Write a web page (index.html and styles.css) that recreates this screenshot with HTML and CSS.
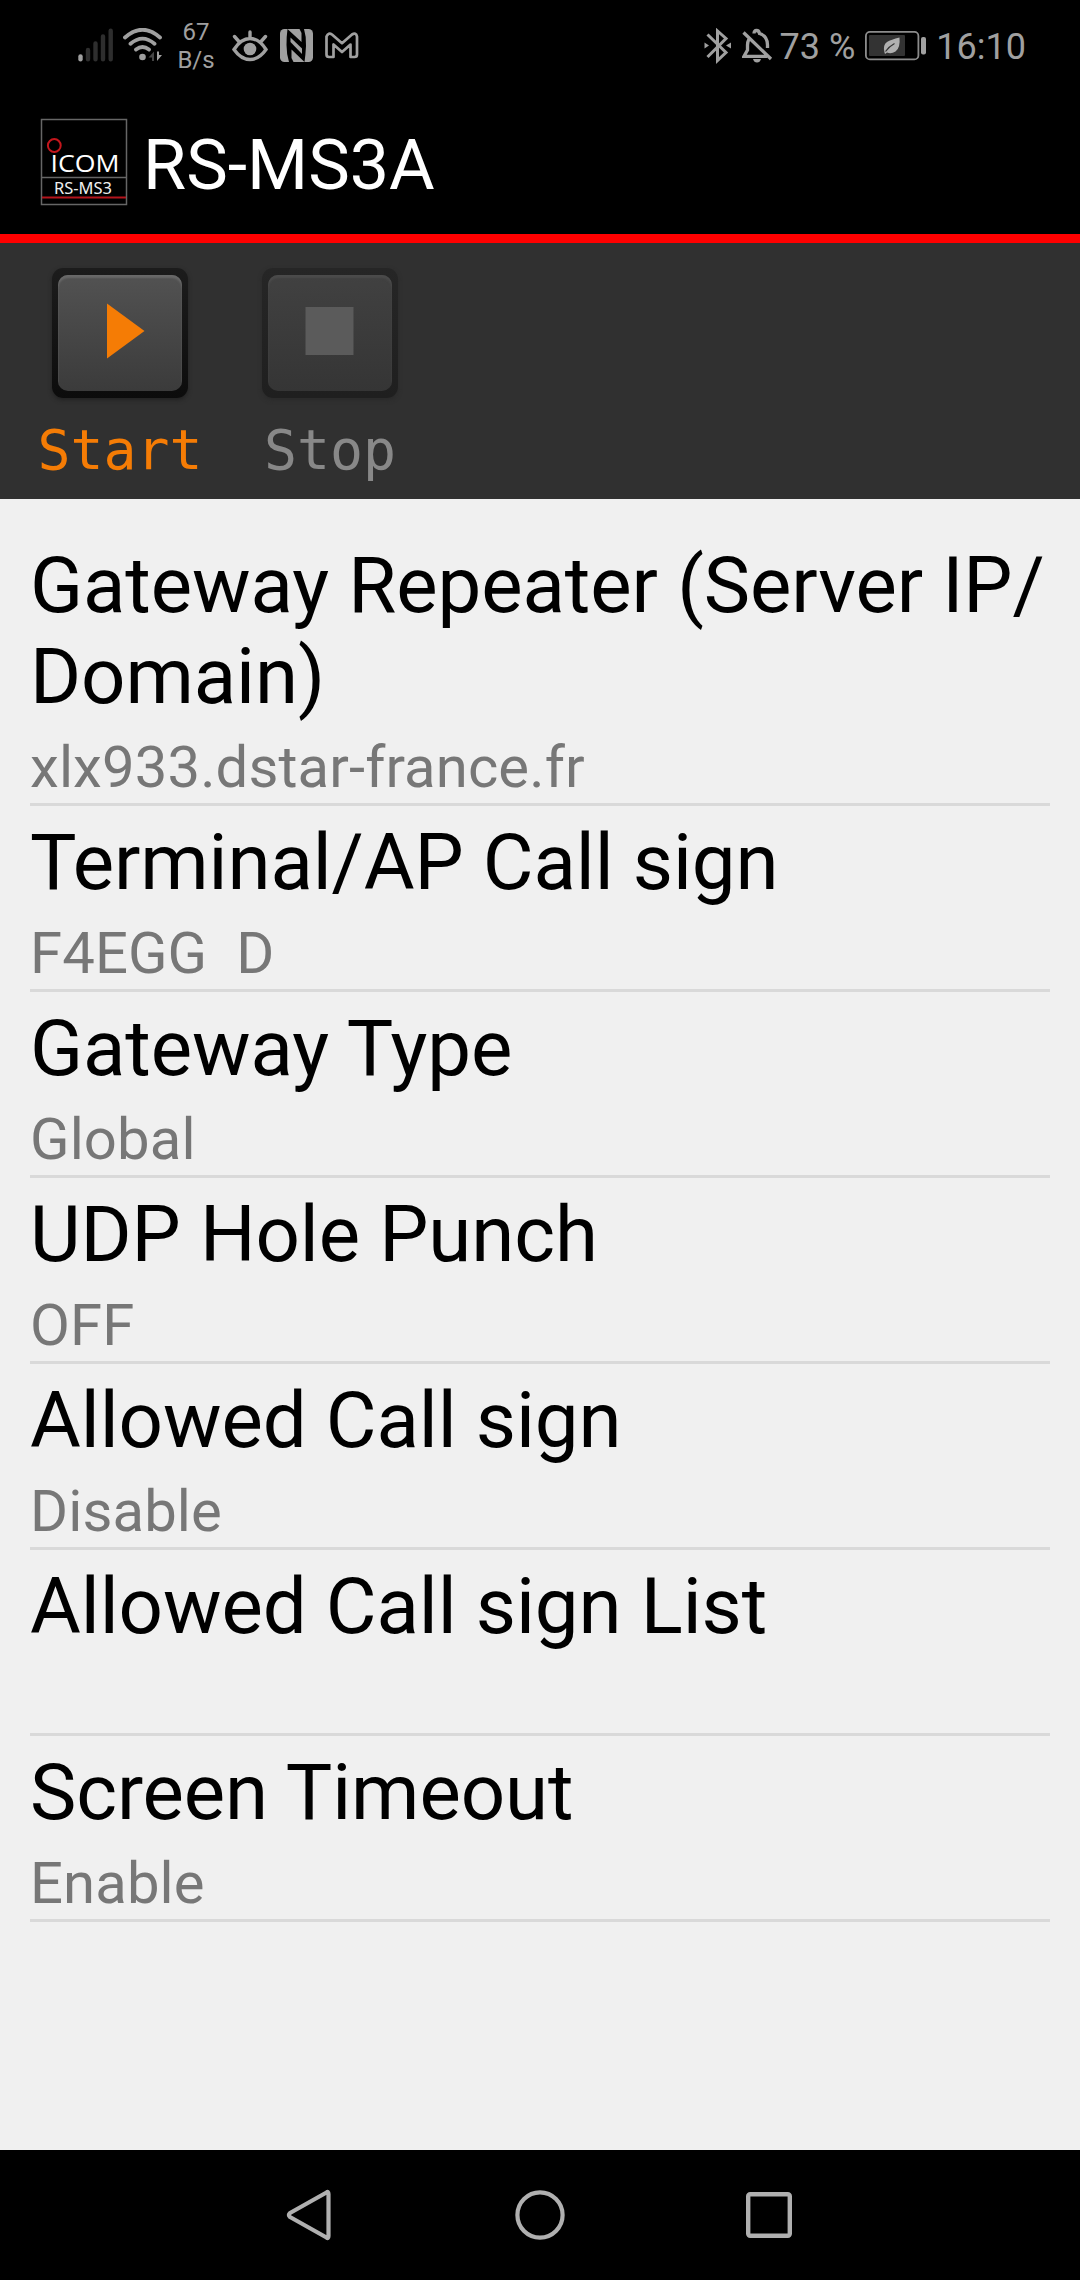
FILE: index.html
```html
<!DOCTYPE html>
<html lang="en">
<head>
<meta charset="utf-8">
<title>RS-MS3A</title>
<link rel="stylesheet" href="styles.css">
</head>
<body>
<div class="screen">
  <div class="status">
    <div class="status-left">
      <svg class="signal" width="36" height="34" viewBox="0 0 36 34" stroke-width="4.4" stroke-linecap="round" stroke="#2e2e2e"><path d="M2.500 28.500v2.700" stroke="#a0a0a0"/><path d="M10 22v9.200M17.500 15.500v15.700M25 8.500v22.700M32.700 2.700v28.500"/></svg>
      <svg class="wifi" width="40" height="34" viewBox="0 0 40 34" fill="none" stroke="#a0a0a0" stroke-width="3.800" stroke-linecap="round"><path d="M2 9.500Q19.500-6 37 9.500M7.500 15.700Q19.500 5.500 31.500 15.700M13 21.500Q19.500 16.500 26 21.500"/><circle cx="19.500" cy="29" r="3.300" fill="#a0a0a0" stroke="none"/><path d="M25.500 29.500l5.500-6v9.500h-2v-3.500z" fill="#444" stroke="none"/><path d="M34 23.500v9.500l5-6h-3v-3.500z" fill="#a0a0a0" stroke="none"/></svg>
      <div class="rate">67<br>B/s</div>
      <svg class="eye" width="36" height="32" viewBox="0 0 36 32" fill="none" stroke="#a0a0a0" stroke-width="3.400" stroke-linecap="round"><path d="M2 19.500Q9 8.500 18 8.500T34 19.500Q27 29.500 18 29.500T2 19.500zM18 8V2M6.500 11L2.500 6.500M29.500 11L33.500 6.500"/><circle cx="18" cy="19" r="6.300" fill="#a0a0a0" stroke="none"/></svg>
      <svg class="nfc" width="34" height="34" viewBox="0 0 34 34"><rect width="33" height="33" rx="4.500" fill="#a0a0a0"/><path d="M7.500 0L21.500 13V4L19.500 0H24Q26.500 8 26 17T24.500 33L11.500 20.500V29L13.500 33H9Q6.500 25 6.500 16T7.500 0z" fill="#000"/><path d="M10.500 8.500L22 19.500V25L10.500 13z" fill="#a0a0a0"/></svg>
      <svg class="mail" width="34" height="28" viewBox="0 0 34 28" fill="none" stroke="#a0a0a0" stroke-width="2.700" stroke-linejoin="round"><path d="M1.500 4.500Q3.500 0 7 2.500L17 11.200 27 2.500Q31 0 32 4.500V22.500Q32 25 29.500 25H25.500V12.500L17 20 8.500 12.500V25H4Q1.500 25 1.500 22.500z"/></svg>
    </div>
    <div class="status-right">
      <svg class="bt" width="28" height="36" viewBox="0 0 28 36" fill="none" stroke="#a0a0a0" stroke-width="3"><path d="M3.500 6.500L22 24.500 13.500 32.500V3L22 10.500 3.500 29"/><path d="M.5 14.500L5 17.500.5 20.500zM27 14.500L22 17.500 27 20.500z" fill="#a0a0a0" stroke="none"/></svg>
      <svg class="bell" width="32" height="36" viewBox="0 0 32 36" fill="none" stroke="#a0a0a0" stroke-width="3.300"><path d="M7 11Q5.500 14 5.500 17V22L2 28.300H25M12 5.500Q12 2.500 14.500 2.500T17.500 5.500Q25.500 8 25.500 17V20M1.500 4.500L29 31"/><path d="M11 31h8q-1 3.500-4 3.500T11 31z" fill="#a0a0a0" stroke="none"/></svg>
      <span class="stat-text percent">73 %</span>
      <svg class="battery" width="62" height="30" viewBox="0 0 62 30"><rect x=".9" y=".9" width="52.500" height="27.500" rx="4" fill="none" stroke="#8c8c8c" stroke-width="1.800"/><rect x="4" y="4" width="36" height="21" rx="1" fill="#333"/><rect x="56" y="6" width="5" height="17.500" rx="2" fill="#a0a0a0"/><path d="M34.500 6.500Q35.500 17 30.500 20.500 26 23.500 22 21.500L20 23 19.500 21.500Q17.500 14 22 11 26 8.500 34.500 6.500z" fill="#b0b0b0"/><path d="M20.500 20.500Q24 15.500 29.500 12.500" fill="none" stroke="#333" stroke-width="1.200"/></svg>
      <span class="stat-text">16:10</span>
    </div>
  </div>

  <header class="appbar">
    <svg class="logo" width="88" height="88" viewBox="0 0 88 88"><rect x="1.500" y="1.500" width="85" height="85" fill="none" stroke="#666" stroke-width="1.500"/><path d="M1 59.500H86" stroke="#666" stroke-width="1.500"/><path d="M2 79.500H86" stroke="#b4141c" stroke-width="2.200"/><circle cx="14.300" cy="27.500" r="6.400" fill="none" stroke="#c4161c" stroke-width="2"/><text x="10.500" y="53.500" textLength="69" lengthAdjust="spacingAndGlyphs" class="logo-brand">ICOM</text><text x="14" y="75.500" textLength="58" lengthAdjust="spacingAndGlyphs" class="logo-model">RS-MS3</text></svg>
    <h1 class="title">RS-MS3A</h1>
  </header>

  <div class="toolbar">
    <div class="tool start">
      <div class="key"><div class="face"><svg width="124" height="116" viewBox="0 0 124 116"><path d="M49 28.500V83.500L86.500 56z" fill="#f57c05"/></svg></div></div>
      <div class="tool-label">Start</div>
    </div>
    <div class="tool stop">
      <div class="key"><div class="face"><svg width="124" height="116" viewBox="0 0 124 116"><rect x="37.500" y="32" width="48" height="48" fill="#5b5b5b"/></svg></div></div>
      <div class="tool-label">Stop</div>
    </div>
  </div>

  <main class="list">
    <div class="item"><div class="name">Gateway Repeater (Server IP/<br>Domain)</div><div class="value">xlx933.dstar-france.fr</div></div>
    <div class="item"><div class="name">Terminal/AP Call sign</div><div class="value">F4EGG  D</div></div>
    <div class="item"><div class="name">Gateway Type</div><div class="value">Global</div></div>
    <div class="item"><div class="name">UDP Hole Punch</div><div class="value">OFF</div></div>
    <div class="item"><div class="name">Allowed Call sign</div><div class="value">Disable</div></div>
    <div class="item"><div class="name">Allowed Call sign List</div><div class="value"></div></div>
    <div class="item"><div class="name">Screen Timeout</div><div class="value">Enable</div></div>
  </main>

  <nav class="navbar">
    <svg width="50" height="54" viewBox="0 0 50 54"><path d="M40.500 4.500Q42.500 3 42.500 6V48Q42.500 51 40.500 49.500L4 29Q2 27 4 25z" fill="none" stroke="#b0b0b0" stroke-width="4.200" stroke-linejoin="round"/></svg>
    <svg width="50" height="54" viewBox="0 0 50 54"><circle cx="25" cy="27" r="22.600" fill="none" stroke="#b0b0b0" stroke-width="4.200"/></svg>
    <svg width="50" height="54" viewBox="0 0 50 54"><rect x="4.200" y="6.200" width="41.600" height="41.600" rx="2" fill="none" stroke="#b0b0b0" stroke-width="4.400"/></svg>
  </nav>
</div>
</body>
</html>
```
FILE: styles.css
```css
body {
  margin: 0;
  background: #000;
  font-family: Roboto, sans-serif;
}

.screen {
  display: flex;
  flex-direction: column;
  width: 1080px;
  height: 2280px;
}

.status {
  display: flex;
  justify-content: space-between;
  height: 90px;
  padding: 0 54px 0 78px;
  color: #a0a0a0;
}

.status-left,
.status-right {
  display: flex;
  align-items: flex-start;
}

.status svg { margin-top: 28px; }
.wifi { margin-left: 9px; }

.rate {
  width: 50px;
  margin: 18px 0 0 8px;
  font-size: 24px;
  line-height: 28px;
  text-align: center;
}

.status .eye { margin: 30px 0 0 11px; }
.status .nfc { margin: 29px 0 0 12px; }
.status .mail { margin: 32px 0 0 11px; }

.bell { margin-left: 10px; }

.stat-text {
  margin-top: 26px;
  font-size: 36px;
  line-height: 42px;
  white-space: pre;
}

.percent { margin-left: 6px; }
.status .battery { margin: 31px 9px 0 10px; }

.appbar {
  display: flex;
  box-sizing: border-box;
  height: 153px;
  padding-left: 40px;
  border-bottom: 9px solid #f00;
}

.logo { margin-top: 28px; }
.logo-brand { font: 500 24.500px "Open Sans", sans-serif; fill: #fff; }
.logo-model { font: 16.500px "Noto Sans", sans-serif; fill: #eee; }

.title {
  margin: 34px 0 0 15px;
  color: #fff;
  font-size: 70px;
  font-weight: 400;
  line-height: 82px;
}

.toolbar {
  display: flex;
  height: 256px;
  padding-left: 15px;
  background: #303030;
}

.tool {
  display: flex;
  flex-direction: column;
  align-items: center;
  width: 210px;
}

.key {
  box-sizing: border-box;
  width: 136px;
  height: 130px;
  margin-top: 25px;
  padding: 7px 6px;
  border-radius: 11px;
  background: linear-gradient(#1c1c1c, #0c0c0c);
  box-shadow: 0 2px 4px #222;
}

.face {
  height: 116px;
  border-radius: 10px;
  background: linear-gradient(#525252, #3b3b3b);
  box-shadow: inset 0 3px 2px #696969;
}

.face svg { display: block; }

.stop .key {
  background: linear-gradient(#262626, #1f1f1f);
  box-shadow: 0 2px 4px #2a2a2a;
}

.stop .face {
  background: linear-gradient(#414141, #353535);
  box-shadow: inset 0 3px 2px #4b4b4b;
}

.tool-label {
  margin-top: 20px;
  font-family: "DejaVu Sans Mono", monospace;
  font-size: 54.800px;
  line-height: 64px;
}

.start .tool-label { color: #f57c05; }
.stop .tool-label { color: #888; }

.list {
  flex: 1;
  padding: 30px 30px 0;
  background: #f0f0f0;
}

.item {
  padding: 11px 0 2px;
  border-bottom: 3px solid #d9d9d9;
}

.name {
  color: #000;
  font-size: 78px;
  line-height: 91px;
  letter-spacing: -0.1px;
}

.value {
  height: 67px;
  margin-top: 12px;
  color: #777;
  font-size: 58px;
  line-height: 67px;
  letter-spacing: 0.12px;
  white-space: pre;
}

.navbar {
  display: flex;
  justify-content: center;
  align-items: center;
  gap: 179px;
  height: 130px;
}
```
